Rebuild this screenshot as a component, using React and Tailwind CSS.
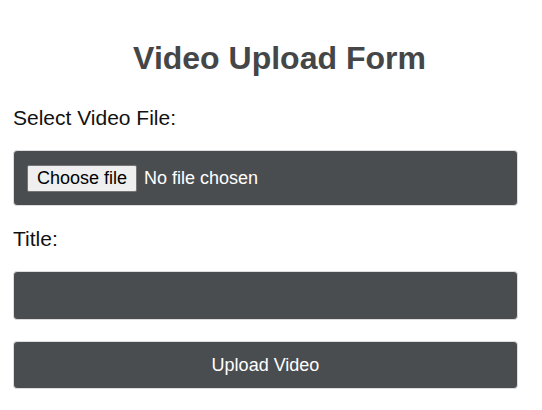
import { useState } from 'react';

export default function App() {
  const [title, setTitle] = useState('');
  const [fileName, setFileName] = useState('');

  return (
    <div className="min-h-screen bg-white font-['Liberation_Sans',Arial,sans-serif]">
      <form
        className="pt-[40px] pl-[13px] w-[518px]"
        onSubmit={(e) => e.preventDefault()}
      >
        {/* Titulo */}
        <h1 className="text-[32px] leading-[37px] font-bold text-[#444648] text-center pl-[28px]">
          Video Upload Form
        </h1>

        <label className="block mt-[29px] text-[21px] leading-[23px] text-[#111]">
          Select Video File:
        </label>
        <label className="mt-[21px] flex items-center h-[56px] px-[13px] bg-[#4a4d50] rounded-[4px] border border-[#ddd] cursor-pointer">
          <input
            type="file"
            accept="video/*"
            className="hidden"
            onChange={(e) => setFileName(e.target.files[0]?.name || '')}
          />
          <span className="h-[27px] px-[9px] flex items-center bg-[#efefef] border border-[#767676] rounded-[2px] text-[18px] text-black">
            Choose file
          </span>
          <span className="ml-[7px] text-[18px] text-white">
            {fileName || 'No file chosen'}
          </span>
        </label>

        <label className="block mt-[21px] text-[21px] leading-[23px] text-[#111]">
          Title:
        </label>
        <input
          type="text"
          value={title}
          onChange={(e) => setTitle(e.target.value)}
          className="mt-[21px] block w-full h-[49px] px-[14px] bg-[#4a4d50] rounded-[4px] border border-[#ddd] text-white text-[18px] outline-none"
        />

        <button
          type="submit"
          className="mt-[21px] block w-full h-[48px] bg-[#4a4d50] rounded-[4px] border border-[#ddd] text-white text-[18px]"
        >
          Upload Video
        </button>
      </form>
    </div>
  );
}
